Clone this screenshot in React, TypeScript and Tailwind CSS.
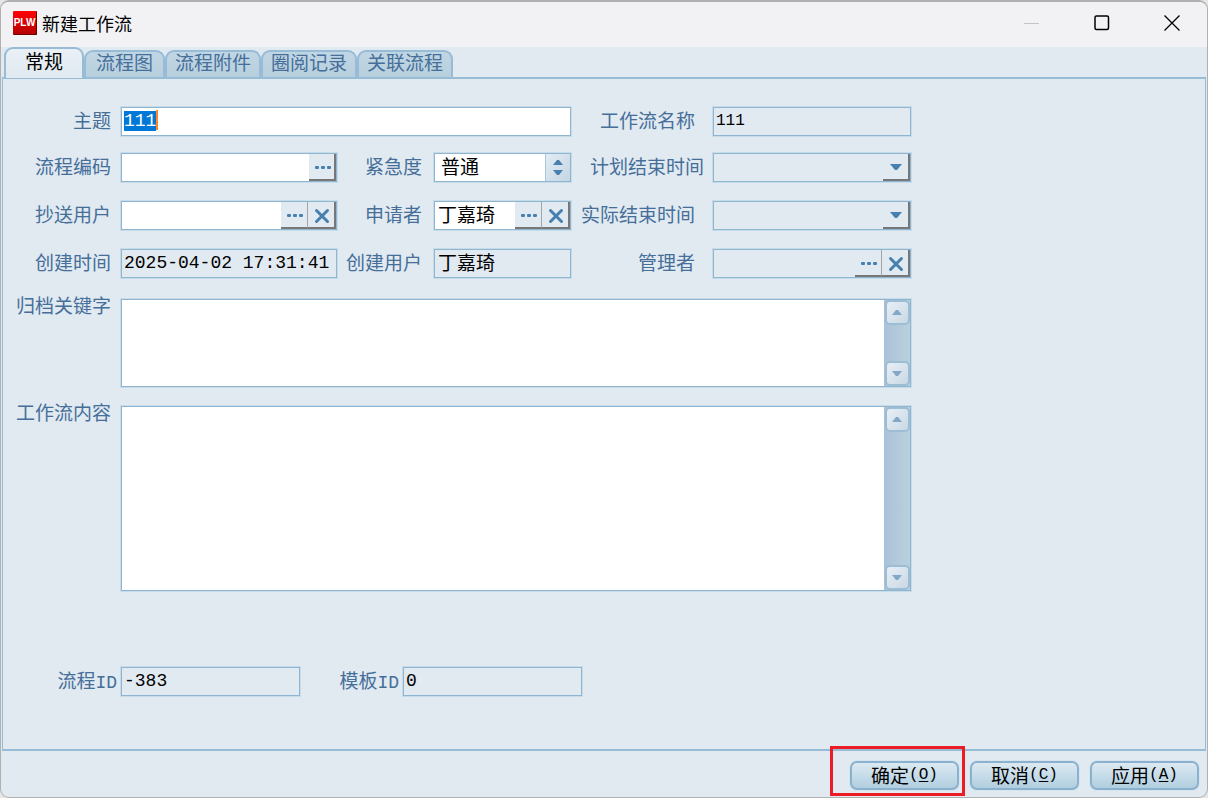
import { useEffect, useRef, type ReactNode } from "react";

const inputClass =
  "h-full w-full min-w-0 flex-1 bg-transparent px-[2px] pb-[2px] font-['Liberation_Mono','Noto_Sans_CJK_SC',monospace] text-[18px] leading-6 text-black outline-none";
const cjkInputClass =
  "h-full w-full min-w-0 flex-1 bg-transparent px-[3px] pb-1 text-[19px] leading-6 text-black outline-none";

function Label({ htmlFor, children, className = "pr-[10px]" }: { htmlFor: string; children: ReactNode; className?: string }) {
  return (
    <label htmlFor={htmlFor} className={`block h-7 whitespace-nowrap text-right text-[19px] leading-[26px] text-[#456f99] ${className}`}>
      {children}
    </label>
  );
}

function TopLabel({ htmlFor, children }: { htmlFor: string; children: ReactNode }) {
  return (
    <label htmlFor={htmlFor} className="col-start-1 block whitespace-nowrap pr-[10px] text-right text-[19px] leading-3 text-[#456f99]">
      {children}
    </label>
  );
}

function Field({ white = false, className = "", children }: { white?: boolean; className?: string; children: ReactNode }) {
  return (
    <div
      className={`relative flex h-[29px] border border-[#8fb6d1] shadow-[0_0_0_1px_#c8dbe8] ${white ? "bg-white" : "bg-[#e1e9f1]"} ${className}`}
    >
      {children}
    </div>
  );
}

function MoreButton({ label, last = false }: { label: string; last?: boolean }) {
  return (
    <button
      type="button"
      aria-label={label}
      className={`flex w-[27px] shrink-0 items-center justify-center border-b-2 border-b-[#777777] bg-[#e1e9f1] pt-[2px] pl-[2px] ${last ? "border-r-2 border-r-[#777777]" : "border-r border-r-[#a4a4a4]"}`}
    >
      <svg width="18" height="4" viewBox="0 0 18 4" fill="#4780ae">
        <rect x="1" y="0" width="4" height="3" rx="1" />
        <rect x="7" y="0" width="4" height="3" rx="1" />
        <rect x="13" y="0" width="4" height="3" rx="1" />
      </svg>
    </button>
  );
}

function ClearButton({ label }: { label: string }) {
  return (
    <button
      type="button"
      aria-label={label}
      className="flex w-[28px] shrink-0 items-center justify-center border-r-2 border-b-2 border-r-[#777777] border-b-[#777777] bg-[#e1e9f1] pt-[2px] pl-[2px]"
    >
      <svg width="16" height="16" viewBox="0 0 16 16" stroke="#4780ae" strokeWidth="3" strokeLinecap="round">
        <path d="M2.500 2.500 13.500 13.500M13.500 2.500 2.500 13.500" />
      </svg>
    </button>
  );
}

function DropButton({ label }: { label: string }) {
  return (
    <button
      type="button"
      aria-label={label}
      className="flex w-[27px] shrink-0 items-center justify-center border-r-2 border-b-2 border-r-[#777777] border-b-[#777777] bg-[#e1e9f1]"
    >
      <svg width="14" height="8" viewBox="0 0 14 8" fill="#4780ae">
        <path d="M1 1H13L8 7H6Z" />
      </svg>
    </button>
  );
}

function ScrollButton({ up = false, label }: { up?: boolean; label: string }) {
  return (
    <button
      type="button"
      aria-label={label}
      className="flex h-[25px] w-[25px] items-center justify-center rounded-[5px] border-2 border-[#9dbdd5] bg-linear-to-br from-[#e8eff5] to-[#c9d8e5]"
    >
      <svg width="10" height="5" viewBox="0 0 10 5" fill="#83a7c6">
        <path d={up ? "M0 5 4 0H6L10 5Z" : "M0 0H10L6 5H4Z"} />
      </svg>
    </button>
  );
}

function Area({ id, className }: { id: string; className: string }) {
  return (
    <div className={`col-span-5 flex border border-[#8fb6d1] bg-white shadow-[0_0_0_1px_#c8dbe8] ${className}`}>
      <textarea id={id} className="min-w-0 flex-1 resize-none bg-transparent px-1 text-[19px] text-black outline-none" />
      <div className="flex w-[26px] flex-col items-center justify-between bg-linear-to-r from-[#a9c2d8] to-[#b9d0dd]">
        <ScrollButton up label="向上滚动" />
        <ScrollButton label="向下滚动" />
      </div>
    </div>
  );
}

function Tab({ active = false, className = "px-2", children }: { active?: boolean; className?: string; children: ReactNode }) {
  return (
    <button
      type="button"
      role="tab"
      aria-selected={active}
      className={
        active
          ? "relative -mb-px h-[31px] rounded-t-[9px] border-2 border-b-0 border-[#98bcd5] bg-linear-to-b from-[#e9f0f6] to-[#e1e9f1] px-[19px] pb-[6px] text-[19px] leading-6 text-black"
          : `h-[27px] rounded-t-[9px] border-2 border-b-0 border-[#98bcd5] bg-linear-to-b from-[#c1d6e5] to-[#b7cfdd] pb-[6px] text-[19px] leading-5 text-[#456f99] ${className}`
      }
    >
      {children}
    </button>
  );
}

function ActionButton({ text, accessKey }: { text: string; accessKey: string }) {
  return (
    <button
      type="button"
      className="flex h-[29px] w-[109px] items-center justify-center rounded-[7px] border-2 border-[#8ab1cd] bg-linear-to-b from-[#dce9f1] via-[#c6dce9] to-[#b1cedf] pb-[2px] text-[19px] leading-6 text-black shadow-[0_0_0_1px_#d5e4ee]"
    >
      {text}
      <span className="font-['Liberation_Mono',monospace] text-[16px]">
        (<span className="underline underline-offset-2">{accessKey}</span>)
      </span>
    </button>
  );
}

function Mono({ children }: { children: ReactNode }) {
  return <span className="font-['Liberation_Mono',monospace] text-[18px]">{children}</span>;
}

export default function App() {
  const subject = useRef<HTMLInputElement>(null);

  useEffect(() => {
    subject.current?.focus();
    subject.current?.select();
  }, []);

  return (
    <div className="min-h-screen bg-[#e6e6e6] font-['Noto_Sans_CJK_SC',sans-serif]">
      <div className="flex min-h-screen flex-col overflow-hidden rounded-[9px] border border-t-2 border-[#b0b0b0] bg-[#e1e9f1]">
        <header className="flex h-[45px] shrink-0 items-center bg-[#f2f2f5] pb-[3px] pl-3">
          <div className="flex h-6 w-6 items-center justify-center overflow-hidden rounded-[1px] border-r border-b border-[#6d0000] bg-linear-to-b from-[#ff0505] to-[#b50000] font-['Liberation_Sans',sans-serif] text-[10px] leading-none font-bold text-white">
            PLW
          </div>
          <h1 className="ml-[5px] flex-1 text-[18px] leading-6 text-black">新建工作流</h1>
          <div className="flex h-full">
            <button type="button" aria-label="最小化" disabled className="flex w-[70px] items-center justify-center">
              <svg width="16" height="16" viewBox="0 0 16 16" stroke="#c3c4c6">
                <path d="M0 8.5H15" />
              </svg>
            </button>
            <button type="button" aria-label="最大化" className="flex w-[70px] items-center justify-center">
              <svg width="16" height="16" viewBox="0 0 16 16" fill="none" stroke="#000" strokeWidth="1.5">
                <rect x="1" y="1" width="13.500" height="13.500" rx="1.5" />
              </svg>
            </button>
            <button type="button" aria-label="关闭" className="flex w-[70px] items-center justify-center">
              <svg width="16" height="16" viewBox="0 0 16 16" stroke="#000" strokeWidth="1.3">
                <path d="M.5.5 15.5 15.5M15.5.5.5 15.5" />
              </svg>
            </button>
          </div>
        </header>

        <div role="tablist" className="flex h-[30px] shrink-0 items-end pl-[3px]">
          <Tab active>常规</Tab>
          <Tab className="px-[10px]">流程图</Tab>
          <Tab>流程附件</Tab>
          <Tab>圈阅记录</Tab>
          <Tab>关联流程</Tab>
        </div>

        <main className="mx-px flex-1 border border-t-2 border-b-2 border-[#98bcd5] pt-7">
          <div className="grid grid-cols-[118px_minmax(0,216fr)_97px_minmax(0,137fr)_142px_minmax(0,198fr)_minmax(0,294fr)] grid-rows-[46px_48px_48px_50px_107px_185px] items-start">
            <Label htmlFor="subject">主题</Label>
            <Field white className="col-span-3">
              <input
                id="subject"
                ref={subject}
                defaultValue="111"
                className={`${inputClass} selection:bg-[#0078d7] selection:text-white`}
              />
              <span className="absolute top-[2px] left-[34px] h-5 w-[2px] bg-[#ff8728]" />
            </Field>
            <Label htmlFor="flow-name" className="pr-[18px]">工作流名称</Label>
            <Field>
              <input
                id="flow-name"
                readOnly
                defaultValue="111"
                className="h-full w-full min-w-0 bg-transparent px-[2px] pb-[2px] font-['Liberation_Mono',monospace] text-[16px] leading-6 text-black outline-none"
              />
            </Field>

            <Label htmlFor="flow-code" className="col-start-1 pr-[10px]">流程编码</Label>
            <Field white>
              <input id="flow-code" className={inputClass} />
              <MoreButton label="选择流程编码" last />
            </Field>
            <Label htmlFor="urgency" className="pr-3">紧急度</Label>
            <Field white>
              <select id="urgency" className="h-full w-full appearance-none bg-transparent px-[6px] pb-1 text-[19px] leading-6 text-black outline-none">
                <option>普通</option>
              </select>
              <span className="pointer-events-none absolute inset-y-0 right-0 flex w-[25px] items-center justify-center border-l border-[#a9c7dc] bg-linear-to-br from-[#e3ecf3] to-[#c4d5e4]">
                <svg width="10" height="15" viewBox="0 0 10 15" fill="#4780ae">
                  <path d="M0 5 4 0H6L10 5ZM0 10H10L6 15H4Z" />
                </svg>
              </span>
            </Field>
            <Label htmlFor="planned-end" className="pr-[9px]">计划结束时间</Label>
            <Field>
              <input id="planned-end" className={inputClass} />
              <DropButton label="选择计划结束时间" />
            </Field>

            <Label htmlFor="cc-user" className="col-start-1 pr-[10px]">抄送用户</Label>
            <Field white>
              <input id="cc-user" className={inputClass} />
              <MoreButton label="选择抄送用户" />
              <ClearButton label="清除抄送用户" />
            </Field>
            <Label htmlFor="applicant" className="pr-3">申请者</Label>
            <Field white>
              <input id="applicant" defaultValue="丁嘉琦" className={cjkInputClass} />
              <MoreButton label="选择申请者" />
              <ClearButton label="清除申请者" />
            </Field>
            <Label htmlFor="actual-end" className="pr-[18px]">实际结束时间</Label>
            <Field>
              <input id="actual-end" className={inputClass} />
              <DropButton label="选择实际结束时间" />
            </Field>

            <Label htmlFor="created-at" className="col-start-1 pr-[10px]">创建时间</Label>
            <Field>
              <input id="created-at" readOnly defaultValue="2025-04-02 17:31:41" className={inputClass} />
            </Field>
            <Label htmlFor="created-by" className="pr-3">创建用户</Label>
            <Field>
              <input id="created-by" readOnly defaultValue="丁嘉琦" className={cjkInputClass} />
            </Field>
            <Label htmlFor="manager" className="pr-[18px]">管理者</Label>
            <Field>
              <input id="manager" className={inputClass} />
              <MoreButton label="选择管理者" />
              <ClearButton label="清除管理者" />
            </Field>

            <TopLabel htmlFor="keywords">归档关键字</TopLabel>
            <Area id="keywords" className="h-[88px]" />
            <TopLabel htmlFor="content">工作流内容</TopLabel>
            <Area id="content" className="h-[185px]" />
          </div>

          <div className="mt-[76px] grid grid-cols-[118px_minmax(0,179fr)_103px_minmax(0,179fr)_minmax(0,623fr)] items-start">
            <Label htmlFor="flow-id" className="pr-1">
              流程<Mono>ID</Mono>
            </Label>
            <Field>
              <input id="flow-id" readOnly defaultValue="-383" className={inputClass} />
            </Field>
            <Label htmlFor="template-id" className="pr-1">
              模板<Mono>ID</Mono>
            </Label>
            <Field>
              <input id="template-id" readOnly defaultValue="0" className={inputClass} />
            </Field>
          </div>
        </main>

        <footer className="flex h-[46px] shrink-0 items-start justify-end gap-[11px] pt-[10px] pr-2">
          <div className="relative">
            <ActionButton text="确定" accessKey="O" />
            <div className="pointer-events-none absolute -top-[15px] -left-5 h-[50px] w-[135px] border-[3px] border-[#ed1c24]" />
          </div>
          <ActionButton text="取消" accessKey="C" />
          <ActionButton text="应用" accessKey="A" />
        </footer>
      </div>
    </div>
  );
}
